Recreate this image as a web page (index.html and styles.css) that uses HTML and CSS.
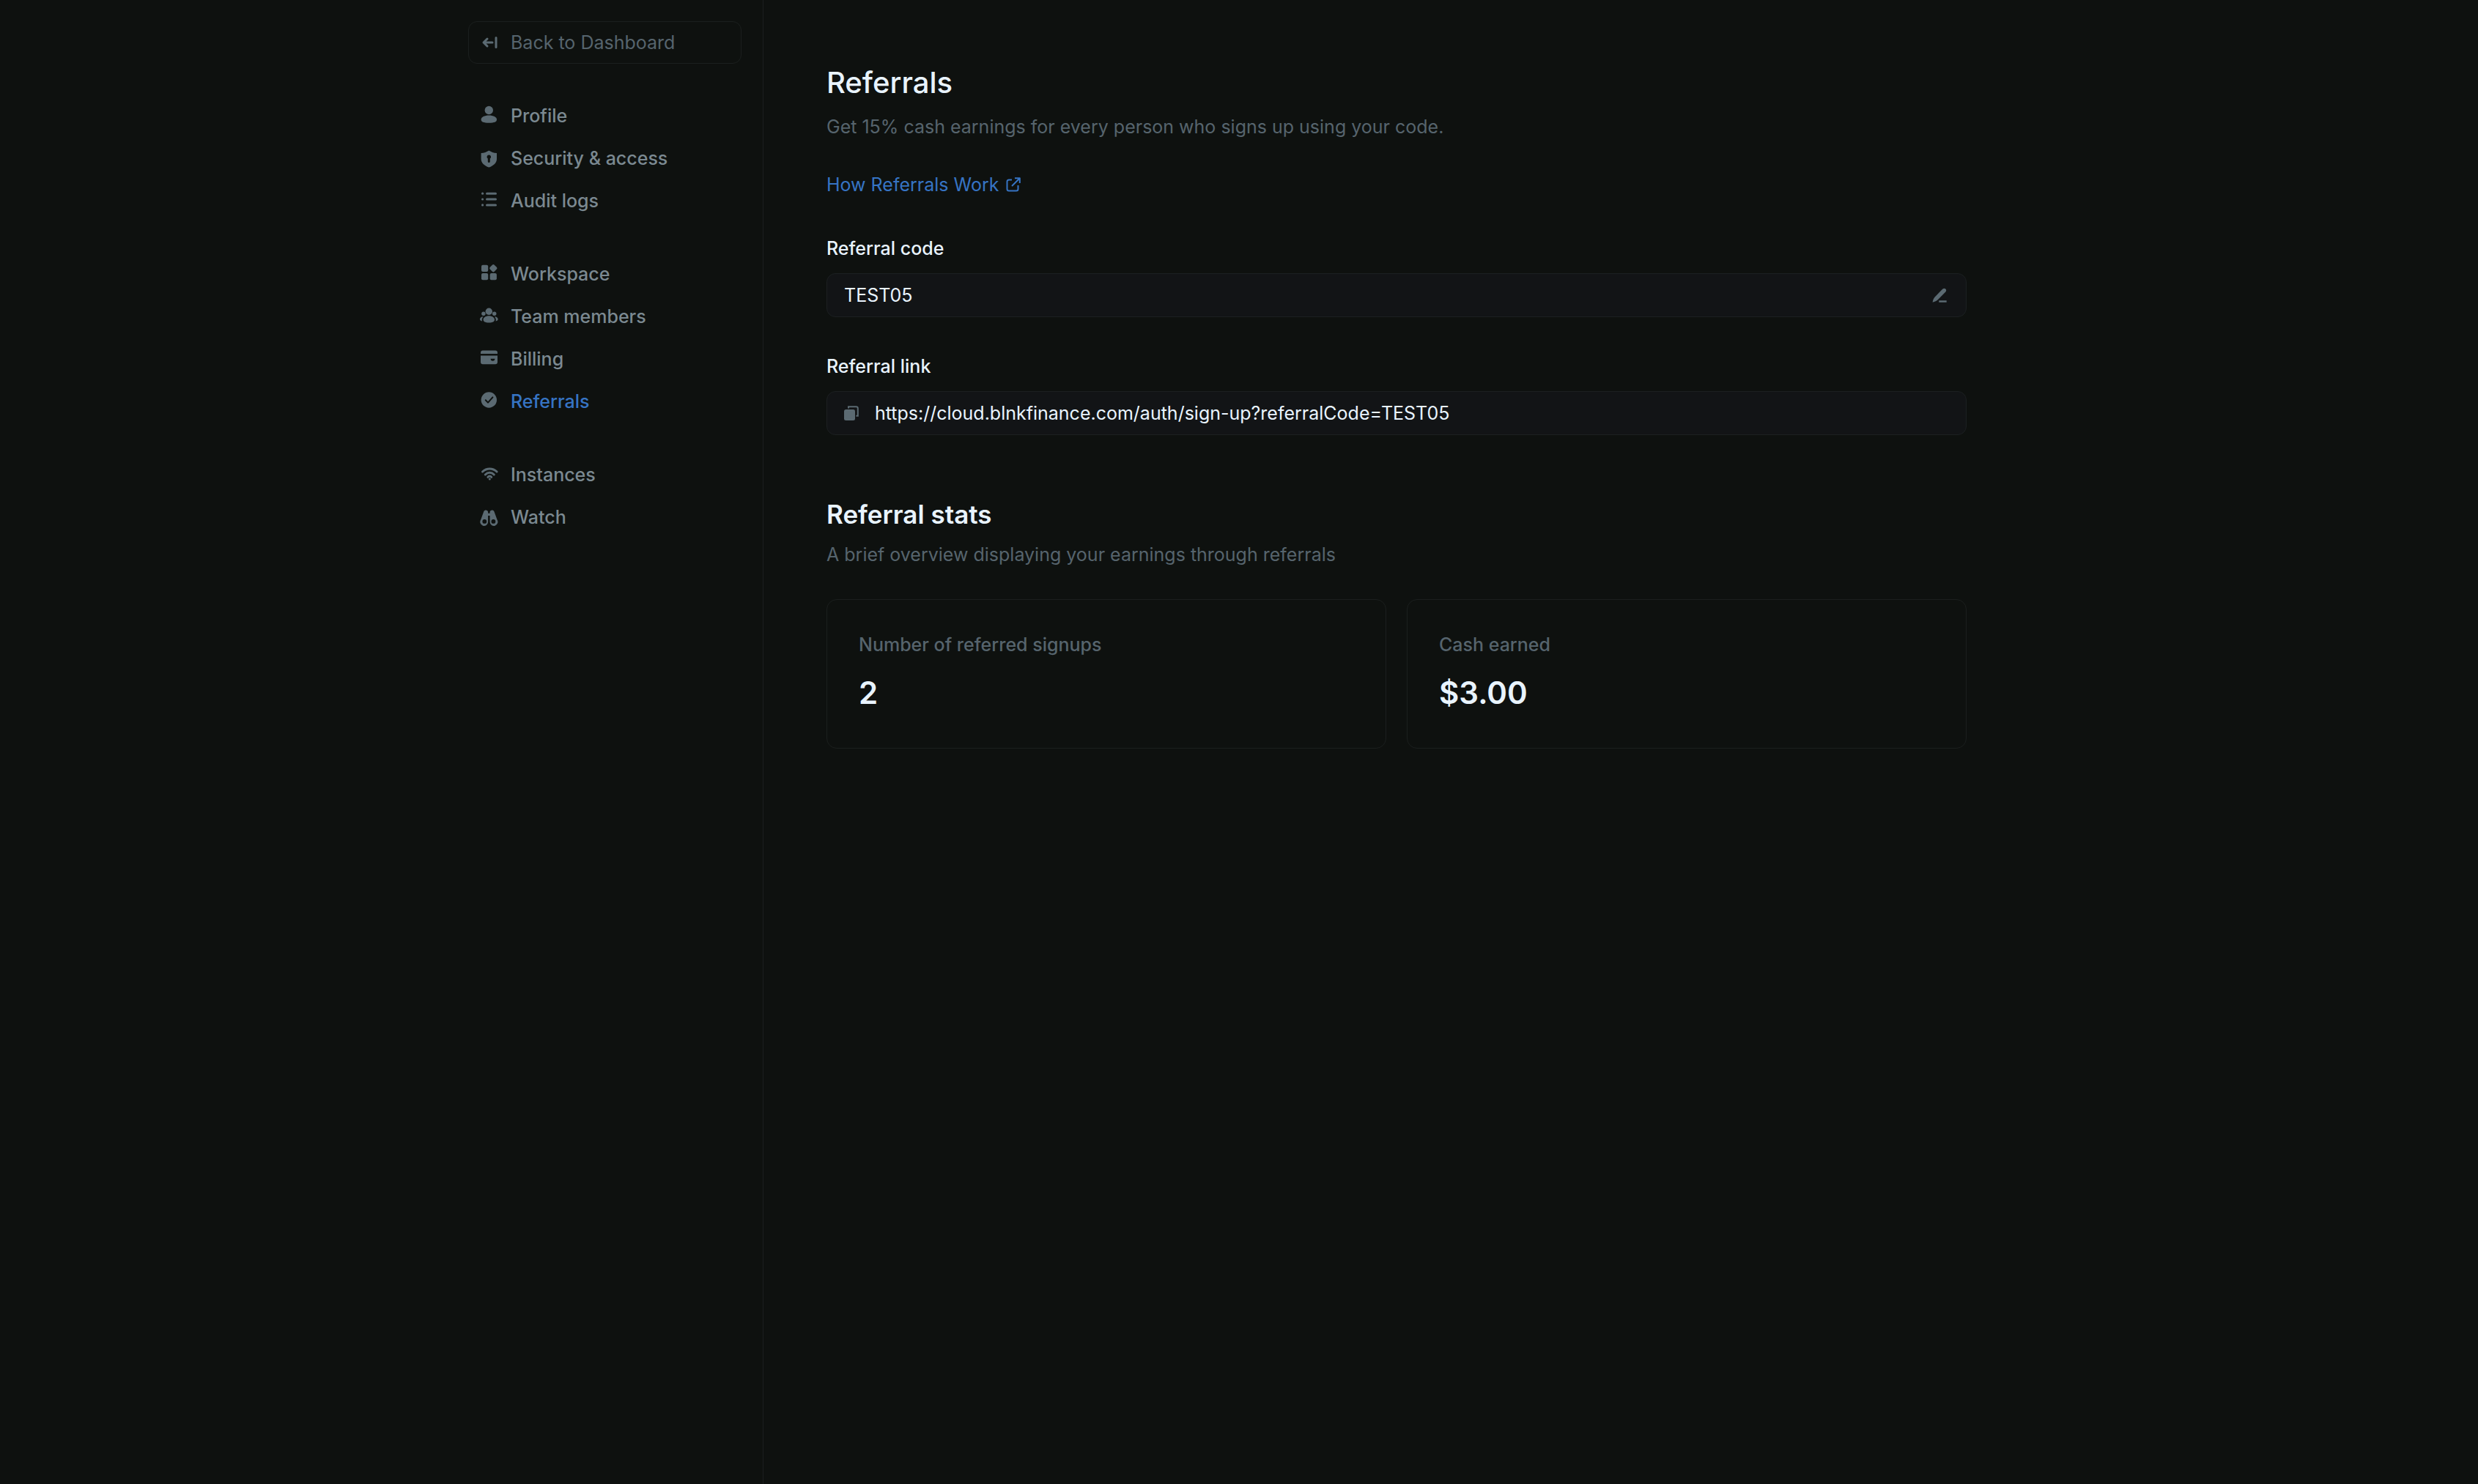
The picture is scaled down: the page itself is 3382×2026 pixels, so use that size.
FILE: index.html
```html
<!DOCTYPE html>
<html lang="en">
<head>
    <meta charset="UTF-8">
    <meta name="viewport" content="width=device-width, initial-scale=1.0">
    <title>Referrals</title>
    <link rel="stylesheet" href="styles.css">
</head>
<body>
    <div class="layout">
        <aside class="sidebar">
            <a class="back-link" href="#">
                <svg class="icon" viewBox="0 0 28 28"><path class="line" d="M19 14H7M12 9l-5 5 5 5M24 7.500v13"/></svg>
                Back to Dashboard
            </a>
            <nav class="nav">
                <ul class="nav-group">
                    <li><a href="#">
                        <svg class="icon" viewBox="0 0 28 28"><circle cx="14.300" cy="6.500" r="5.700"/><path d="M14.300 13.500c6 0 10.700 2.300 10.700 5.600 0 3.400-3 4.700-10.700 4.700S3.600 22.500 3.600 19.100c0-3.300 4.700-5.600 10.700-5.600z"/></svg>
                        Profile
                    </a></li>
                    <li><a href="#">
                        <svg class="icon" viewBox="0 0 28 28"><path fill-rule="evenodd" d="M14.300 3.400c3 2 6.500 3.300 10.700 3.500V15c0 5.500-4.500 9.200-10.700 11.600C8.100 24.200 3.600 20.500 3.600 15V6.900c4.200-.2 7.700-1.500 10.700-3.500zm0 6.100a2.700 2.700 0 0 0-1.500 5v4a1.500 1.500 0 0 0 3 0v-4a2.700 2.700 0 0 0-1.500-5z"/></svg>
                        Security &amp; access
                    </a></li>
                    <li><a href="#">
                        <svg class="icon" viewBox="0 0 28 28"><path class="line" d="M11.500 4.200h12M11.500 12h12M11.500 19.900h12"/><circle cx="5.600" cy="4.200" r="1.600"/><circle cx="5.600" cy="12" r="1.600"/><circle cx="5.600" cy="19.900" r="1.600"/></svg>
                        Audit logs
                    </a></li>
                </ul>
                <ul class="nav-group">
                    <li><a href="#">
                        <svg class="icon" viewBox="0 0 28 28"><rect x="4" y="1.700" width="9.200" height="9.200" rx="2"/><rect x="4" y="13.100" width="9.200" height="9.200" rx="2"/><rect x="15.700" y="13.100" width="9.200" height="9.200" rx="2"/><rect x="16.100" y="2" width="8.400" height="8.400" rx="2" transform="rotate(45 20.300 6.200)"/></svg>
                        Workspace
                    </a></li>
                    <li><a href="#">
                        <svg class="icon" viewBox="0 0 28 28"><circle cx="14.300" cy="7.200" r="4.700"/><circle cx="6.900" cy="10.200" r="2.700"/><circle cx="21.700" cy="10.200" r="2.700"/><path d="M14.300 13.200c4.300 0 7.700 2.300 7.700 5 0 2.800-2.200 4.200-7.700 4.200s-7.700-1.400-7.700-4.200c0-2.700 3.400-5 7.700-5zM6.700 14.200C5 16 4.300 18 5 20.400 3 20.300 1.900 19.300 1.900 17.800c0-2 2.100-3.500 4.800-3.600zM21.900 14.200c1.700 1.800 2.400 3.800 1.700 6.200 2-.1 3.100-1.100 3.100-2.600 0-2-2.100-3.500-4.800-3.600z"/></svg>
                        Team members
                    </a></li>
                    <li><a href="#">
                        <svg class="icon" viewBox="0 0 28 28"><path fill-rule="evenodd" d="M6 2.500h17a3 3 0 0 1 3 3V7H3V5.500a3 3 0 0 1 3-3zM3 9.600h23v8.600a3 3 0 0 1-3 3H6a3 3 0 0 1-3-3zm13.600 4.200c0 2 1 2.900 2.900 2.900s2.900-.9 2.900-2.900z"/></svg>
                        Billing
                    </a></li>
                    <li><a class="active" href="#">
                        <svg class="icon" viewBox="0 0 28 28"><circle cx="14.300" cy="12" r="10.700"/><path class="check" d="M9.800 12.300l3.200 3.300 6.400-7.200"/></svg>
                        Referrals
                    </a></li>
                </ul>
                <ul class="nav-group">
                    <li><a href="#">
                        <svg class="icon" viewBox="0 0 28 28"><path class="line" d="M5.500 10c5.700-5.400 13.900-5.400 19.600 0M9.300 14c3.500-3.700 8.500-3.700 12 0M12.900 17.300c1.500-1.600 3.300-1.600 4.800 0"/><circle cx="15.300" cy="20" r="1.500"/></svg>
                        Instances
                    </a></li>
                    <li><a href="#">
                        <svg class="icon" viewBox="0 0 28 28"><path fill-rule="evenodd" d="M7.200 6.500c.6-1.400 1.600-2 2.900-2 1.700 0 2.900 1 3 2.600v1.700h2.500V7.100c.1-1.600 1.300-2.600 3-2.600 1.300 0 2.300.6 2.900 2l4 11.100a5.400 5.400 0 1 1-9.900 3.200V12h-2.500v8.800a5.400 5.400 0 1 1-9.900-3.200zM8.300 17a2.900 2.900 0 1 0 0 5.800 2.900 2.900 0 0 0 0-5.800zm12.100 0a2.900 2.900 0 1 0 0 5.800 2.900 2.900 0 0 0 0-5.800z"/></svg>
                        Watch
                    </a></li>
                </ul>
            </nav>
        </aside>
        <main class="content">
            <h1>Referrals</h1>
            <p class="subtitle">Get 15% cash earnings for every person who signs up using your code.</p>
            <a class="how-link" href="#">
                How Referrals Work
                <svg class="icon-small" viewBox="0 0 20 20"><path d="M8 3.500H4a2.500 2.500 0 0 0-2.500 2.500v10A2.500 2.500 0 0 0 4 18.500h10a2.500 2.500 0 0 0 2.500-2.500v-5M12 1.200h6.800V8M18.500 1.500L8 12"/></svg>
            </a>

            <div class="field">
                <label for="referralCode">Referral code</label>
                <div class="input-box">
                    <input type="text" id="referralCode" value="TEST05" readonly>
                    <button type="button" aria-label="Edit referral code">
                        <svg class="icon" viewBox="0 0 28 28"><path d="M18.100 5.800c1.500-1.400 3.100-1.500 4.300-.3s1.100 2.900-.3 4.300L12 20c-1.800 1.700-4.300 3-7.400 3.700.4-3.100 1.600-5.800 3.300-7.500zM13.300 21.200h10.400v2.500H13.300z"/></svg>
                    </button>
                </div>
            </div>
            <div class="field">
                <label for="referralLink">Referral link</label>
                <div class="input-box">
                    <button type="button" aria-label="Copy referral link">
                        <svg class="icon-small" viewBox="0 0 20 20"><rect x="0" y="5" width="15" height="15" rx="2.500"/><path d="M6 3.600V1.200h10.500a2.300 2.300 0 0 1 2.300 2.300v10.300h-2.400" class="outline"/></svg>
                    </button>
                    <input type="text" id="referralLink" value="https://cloud.blnkfinance.com/auth/sign-up?referralCode=TEST05" readonly>
                </div>
            </div>

            <h2>Referral stats</h2>
            <p class="stats-text">A brief overview displaying your earnings through referrals</p>
            <div class="stats">
                <div class="card">
                    <p class="card-label">Number of referred signups</p>
                    <p class="card-value">2</p>
                </div>
                <div class="card">
                    <p class="card-label">Cash earned</p>
                    <p class="card-value">$3.00</p>
                </div>
            </div>
        </main>
    </div>
</body>
</html>
```
FILE: styles.css
```css
* {
    box-sizing: border-box;
}
body {
    margin: 0;
    background-color: #0e110f;
    color: #e9f4ff;
    font-family: Inter, "Liberation Sans", sans-serif;
    font-size: 25px;
    line-height: 40px;
}
h1, h2, p, ul {
    margin: 0;
    padding: 0;
}
a {
    text-decoration: none;
}
.layout {
    display: flex;
    max-width: 2162px;
    min-height: 100vh;
    margin: 0 auto;
}
.icon {
    width: 28px;
    height: 28px;
    flex-shrink: 0;
    fill: #5b6a72;
}
.icon .line {
    fill: none;
    stroke: #5b6a72;
    stroke-width: 3px;
    stroke-linecap: round;
    stroke-linejoin: round;
}
.icon .check {
    fill: none;
    stroke: #0e110f;
    stroke-width: 2px;
    stroke-linecap: round;
    stroke-linejoin: round;
}
.icon-small {
    width: 20px;
    height: 20px;
    flex-shrink: 0;
}

/* Sidebar */
.sidebar {
    width: 432px;
    flex-shrink: 0;
    padding: 29px;
    border-right: 1px solid #1b1f1e;
}
.back-link {
    display: flex;
    align-items: center;
    gap: 16px;
    height: 58px;
    padding: 0 13px;
    border: 1px solid #1b1f1e;
    border-radius: 12px;
    color: #56646d;
}
.nav {
    display: flex;
    flex-direction: column;
    gap: 66px;
    margin-top: 54px;
}
.nav-group {
    display: flex;
    flex-direction: column;
    gap: 24px;
    list-style: none;
}
.nav-group a {
    display: flex;
    align-items: center;
    gap: 16px;
    padding: 0 14px;
    line-height: 34px;
    font-weight: 500;
    color: #7b8991;
}
.nav-group a.active {
    color: #3674c4;
}

/* Main content */
.content {
    flex: 1;
    padding: 89px 88px 89px 86px;
}
h1 {
    font-size: 40px;
    line-height: 48px;
    font-weight: 500;
}
.subtitle {
    margin-top: 16px;
    color: #56646d;
}
.how-link {
    display: flex;
    align-items: center;
    gap: 10px;
    width: fit-content;
    margin-top: 39px;
    color: #3674c4;
}
.how-link path {
    fill: none;
    stroke: #3674c4;
    stroke-width: 2px;
    stroke-linejoin: round;
}
.field {
    margin-top: 47px;
}
.field label {
    display: block;
    margin-bottom: 14px;
    font-weight: 500;
}
.input-box {
    display: flex;
    align-items: center;
    gap: 22px;
    height: 60px;
    padding: 0 22px 0 23px;
    background-color: #121416;
    border: 1px solid #1c2021;
    border-radius: 12px;
}
.input-box input {
    flex: 1;
    min-width: 0;
    padding: 0;
    border: none;
    outline: none;
    background: none;
    color: inherit;
    font: inherit;
}
.input-box button {
    display: flex;
    padding: 0;
    border: none;
    background: none;
    cursor: pointer;
}
.input-box .icon-small {
    fill: #5b6a72;
}
.input-box .outline {
    fill: none;
    stroke: #5b6a72;
    stroke-width: 2px;
}

/* Stats */
h2 {
    margin-top: 86px;
    font-size: 35px;
    line-height: 44px;
    font-weight: 600;
}
.stats-text {
    margin-top: 13px;
    color: #56646d;
}
.stats {
    display: grid;
    grid-template-columns: 1fr 1fr;
    gap: 28px;
    margin-top: 41px;
}
.card {
    padding: 41px 43px 47px;
    border: 1px solid #1b1f1e;
    border-radius: 14px;
}
.card-label {
    font-weight: 500;
    color: #56646d;
}
.card-value {
    margin-top: 18px;
    font-size: 42px;
    line-height: 56px;
    font-weight: 600;
}
```
